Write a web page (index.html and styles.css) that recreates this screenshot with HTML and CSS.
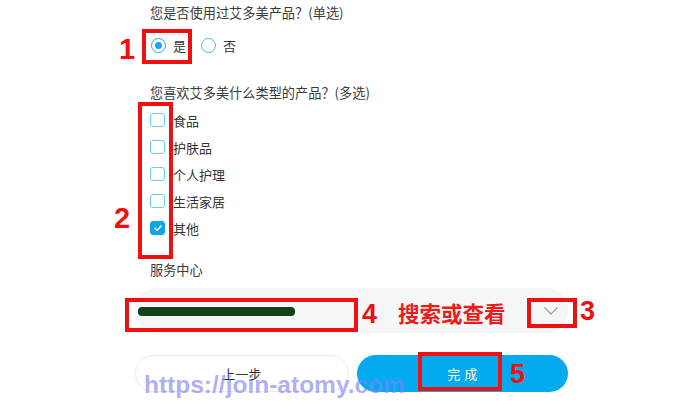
FILE: index.html
```html
<!DOCTYPE html>
<html lang="zh-CN">
<head>
<meta charset="utf-8">
<title>服务中心</title>
<link rel="stylesheet" href="styles.css">
</head>
<body>
<main class="form">
  <section class="q">
    <p class="q-title">您是否使用过艾多美产品？(单选)</p>
    <div class="radios">
      <label class="opt"><span class="radio on"></span><span>是</span></label>
      <label class="opt"><span class="radio"></span><span>否</span></label>
    </div>
  </section>
  <section class="q q2">
    <p class="q-title">您喜欢艾多美什么类型的产品？(多选)</p>
    <ul class="checks">
      <li class="opt"><span class="check"></span><span>食品</span></li>
      <li class="opt"><span class="check"></span><span>护肤品</span></li>
      <li class="opt"><span class="check"></span><span>个人护理</span></li>
      <li class="opt"><span class="check"></span><span>生活家居</span></li>
      <li class="opt"><span class="check on"><svg viewBox="0 0 14 14" width="14" height="14"><path d="M3.5 7.2 L6 9.6 L10.6 4.6" fill="none" stroke="#fff" stroke-width="1.8" stroke-linecap="round" stroke-linejoin="round"/></svg></span><span>其他</span></li>
    </ul>
  </section>
  <section class="q q3">
    <p class="q-title">服务中心</p>
    <div class="select">
      <span class="value"></span>
      <svg class="chev" viewBox="0 0 14 8" width="14" height="8"><path d="M0.5 0.5 L7 7 L13.5 0.5" fill="none" stroke="#9a9a9a" stroke-width="1.1"/></svg>
    </div>
  </section>
  <div class="actions">
    <button class="btn prev">上一步</button>
    <button class="btn done">完成</button>
  </div>
</main>

<div class="marks">
  <div class="box b1"></div><span class="num n1">1</span>
  <div class="box b2"></div><span class="num n2">2</span>
  <div class="box b4"></div><span class="num n4">4</span>
  <span class="hint">搜索或查看</span>
  <div class="box b3"></div><span class="num n3">3</span>
  <div class="box b5"></div><span class="num n5">5</span>
  <span class="wm">https://join-atomy.com</span>
</div>
</body>
</html>
```
FILE: styles.css
```css
html, body {
  margin: 0;
  padding: 0;
  background: #fff;
}
body {
  width: 700px;
  height: 409px;
  overflow: hidden;
  position: relative;
  font-family: "Noto Sans CJK SC", "Noto Sans", sans-serif;
  color: #333;
}
.form {
  width: 433px;
  margin-left: 135px;
  padding-top: 4px;
}
.q-title {
  margin: 0;
  padding-left: 15px;
  font-size: 13.2px;
  line-height: 18px;
  color: #3a3a3a;
}
.radios {
  display: flex;
  gap: 15px;
  margin-top: 14px;
  padding-left: 16px;
}
.opt {
  display: flex;
  align-items: center;
  gap: 7px;
  height: 18px;
  font-size: 13px;
  color: #333;
}
.radio {
  width: 15px;
  height: 15px;
  box-sizing: border-box;
  border: 1.5px solid #4ab8f2;
  border-radius: 50%;
  display: flex;
  align-items: center;
  justify-content: center;
}
.radio.on {
  border-color: #1ea4ee;
}
.radio.on::after {
  content: "";
  width: 7px;
  height: 7px;
  border-radius: 50%;
  background: #1ea4ee;
}
.q2 {
  margin-top: 30px;
}
.checks {
  list-style: none;
  margin: 9px 0 0;
  padding: 0 0 0 15px;
  display: flex;
  flex-direction: column;
  gap: 9px;
}
.checks .opt {
  gap: 8px;
}
.check {
  width: 15px;
  height: 14px;
  box-sizing: border-box;
  border: 1.5px solid #6ccaf5;
  border-radius: 3px;
  display: flex;
}
.check.on {
  background: #0ea3ea;
  border-color: #0ea3ea;
  align-items: center;
  justify-content: center;
}
.check.on svg {
  width: 12px;
  height: 12px;
}
.q3 {
  margin-top: 24px;
}
.select {
  margin-top: 9px;
  height: 45px;
  background: #f5f6f8;
  border-radius: 22px;
  display: flex;
  align-items: center;
  justify-content: space-between;
  padding: 0 6px 0 3px;
}
.value {
  width: 157px;
  height: 9px;
  background: #13421a;
  border-radius: 4px;
  margin-top: 1px;
}
.chev {
  margin-left: auto;
  transform: translateX(-4px);
}
.actions {
  display: flex;
  gap: 8px;
  margin-top: 22px;
}
.btn {
  flex: 1;
  height: 37px;
  border-radius: 19px;
  font-family: "Noto Sans CJK SC", sans-serif;
  font-size: 13px;
  padding: 0;
  cursor: pointer;
}
.prev {
  background: #fff;
  border: 1px solid #ececec;
  color: #333;
}
.done {
  background: #03aaee;
  border: none;
  color: #fff;
  letter-spacing: 4px;
  text-indent: 4px;
}

/* annotation overlay */
.marks {
  position: absolute;
  inset: 0;
  pointer-events: none;
}
.box {
  position: absolute;
  border: 4px solid #f01010;
  box-sizing: border-box;
}
.b1 { left: 142px; top: 29px; width: 50px; height: 35px; }
.b2 { left: 138px; top: 102px; width: 35px; height: 157px; }
.b4 { left: 125px; top: 298px; width: 233px; height: 34px; }
.b3 { left: 527px; top: 298px; width: 50px; height: 30px; }
.b5 { left: 418px; top: 352px; width: 84px; height: 39px; }
.num {
  position: absolute;
  font-family: "Liberation Sans", Arial, sans-serif;
  font-weight: bold;
  font-size: 27px;
  line-height: 1;
  color: #f01010;
}
.n1 { left: 119px; top: 35px; font-size: 29px; }
.n2 { left: 114px; top: 204px; font-size: 29px; }
.n4 { left: 362px; top: 301px; }
.n3 { left: 580px; top: 298px; }
.n5 { left: 510px; top: 361px; }
.hint {
  position: absolute;
  left: 398px;
  top: 298px;
  font-family: "Noto Sans CJK SC", sans-serif;
  font-weight: bold;
  font-size: 21.5px;
  line-height: 30px;
  color: #ee1b1b;
}
.wm {
  position: absolute;
  left: 144px;
  top: 371px;
  font-family: "Liberation Sans", Arial, sans-serif;
  font-weight: bold;
  font-size: 24.5px;
  line-height: 28px;
  color: rgba(130, 130, 245, 0.65);
}
```
